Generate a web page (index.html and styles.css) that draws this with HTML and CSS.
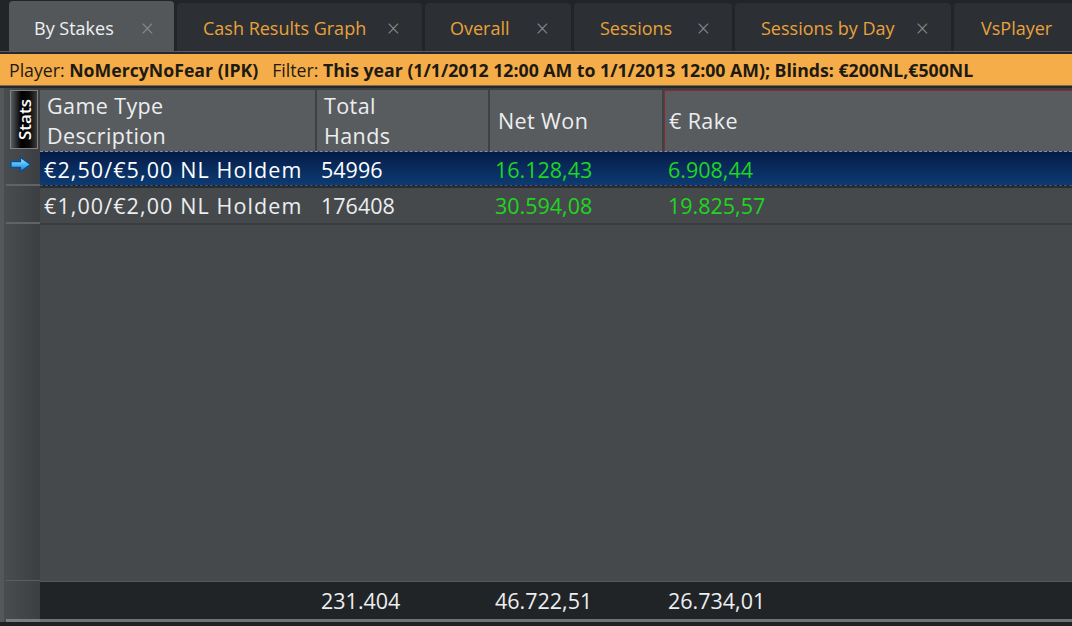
FILE: index.html
```html
<!DOCTYPE html>
<html>
<head>
<meta charset="utf-8">
<link rel="stylesheet" href="styles.css">
</head>
<body>
<div class="app">
  <div class="tabs">
    <div class="tab active"><span class="tl">By Stakes</span><span class="x">×</span></div>
    <div class="tab w1"><span class="tl">Cash Results Graph</span><span class="x">×</span></div>
    <div class="tab w2"><span class="tl">Overall</span><span class="x">×</span></div>
    <div class="tab w3"><span class="tl">Sessions</span><span class="x">×</span></div>
    <div class="tab w4"><span class="tl">Sessions by Day</span><span class="x">×</span></div>
    <div class="tab w5"><span class="tl">VsPlayer</span></div>
  </div>
  <div class="filter">Player: <b>NoMercyNoFear (IPK)</b>&nbsp;&nbsp; Filter: <b>This year (1/1/2012 12:00 AM to 1/1/2013 12:00 AM); Blinds: €200NL,€500NL</b></div>
  <div class="grid">
    <div class="side">
      <div class="side-head"><span class="stats">Stats</span></div>
      <div class="side-row sel">
        <svg width="22" height="17" viewBox="0 0 22 17"><defs><linearGradient id="ag" x1="0" y1="0" x2="0" y2="1"><stop offset="0" stop-color="#b5ecff"/><stop offset="0.5" stop-color="#4cb8f2"/><stop offset="1" stop-color="#1a7fd6"/></linearGradient></defs><path d="M1 5.5 H10.5 V1.5 L20.5 8.5 L10.5 15.5 V11.5 H1 Z" fill="url(#ag)" stroke="#0b4d96" stroke-width="1.3" stroke-linejoin="round"/></svg>
      </div>
      <div class="side-row"></div>
      <div class="side-fill"></div>
      <div class="side-foot"></div>
    </div>
    <div class="table">
      <div class="row head">
        <div class="c c1">Game Type<br>Description</div>
        <div class="c c2">Total<br>Hands</div>
        <div class="c c3">Net Won</div>
        <div class="c c4 sort">€ Rake</div>
      </div>
      <div class="row data sel">
        <div class="c c1">€2,50/€5,00 NL Holdem</div>
        <div class="c c2">54996</div>
        <div class="c c3 g">16.128,43</div>
        <div class="c c4 g">6.908,44</div>
      </div>
      <div class="row data">
        <div class="c c1">€1,00/€2,00 NL Holdem</div>
        <div class="c c2">176408</div>
        <div class="c c3 g">30.594,08</div>
        <div class="c c4 g">19.825,57</div>
      </div>
      <div class="fill"></div>
      <div class="row foot">
        <div class="c c1"></div>
        <div class="c c2">231.404</div>
        <div class="c c3">46.722,51</div>
        <div class="c c4">26.734,01</div>
      </div>
    </div>
  </div>
  <div class="bottom"></div>
</div>
</body>
</html>
```
FILE: styles.css
```css
html, body {
  margin: 0;
  padding: 0;
  background: #26282b;
}
.app {
  width: 1072px;
  height: 626px;
  overflow: hidden;
  display: flex;
  flex-direction: column;
  font-family: "Open Sans", "Noto Sans", sans-serif;
}
.tabs {
  height: 52px;
  display: flex;
  align-items: flex-end;
  padding-left: 9px;
  gap: 3px;
  background: #222427;
  border-bottom: 1px solid #5a5d60;
  box-sizing: border-box;
  flex: none;
}
.tab {
  height: 48px;
  box-sizing: border-box;
  border-radius: 4px 4px 0 0;
  background: #2c2f33;
  display: flex;
  align-items: center;
  padding-top: 2px;
  color: #e9a23b;
  font-size: 18px;
  flex: none;
}
.tab .tl { margin-left: 26px; }
.tab .x {
  color: #8a8c8e;
  font-size: 23px;
  margin-left: auto;
  margin-right: 22px;
  font-weight: 300;
}
.tab.active {
  width: 165px;
  background: #54575a;
  color: #eef0f2;
  height: 50px;
  padding-top: 4px;
}
.tab.active .tl { margin-left: 25px; }
.tab.active .x { margin-right: 20px; }
.tab.w1 { width: 245px; }
.tab.w2 { width: 146px; }
.tab.w2 .tl { margin-left: 25px; }
.tab.w3 { width: 158px; }
.tab.w4 { width: 216px; }
.tab.w5 { width: 130px; }
.tab.w5 .tl { margin-left: 27px; }

.filter {
  flex: none;
  height: 32px;
  margin-top: 2px;
  background: #f4ad48;
  color: #1d1a14;
  font-size: 17.7px;
  line-height: 33px;
  padding-left: 9px;
  white-space: nowrap;
  border-bottom: 1px solid #7c6a4c;
  box-sizing: border-box;
}
.filter b { font-weight: 700; }

.grid {
  flex: none;
  height: 534px;
  display: flex;
  margin-top: 2px;
  border-left: 4px solid #55585b;
  background: #3d4043;
}
.side {
  width: 36px;
  flex: none;
  display: flex;
  flex-direction: column;
  background: linear-gradient(to right, #4a4d50, #3c3f42);
  padding-left: 2px;
  box-sizing: border-box;
}
.side-head {
  height: 62px;
  flex: none;
  padding: 2px 0 0 4px;
  box-sizing: border-box;
}
.stats {
  display: flex;
  align-items: center;
  justify-content: center;
  width: 28px;
  height: 59px;
  background: linear-gradient(to left, #5a5c5e, #000 40%, #0a0a0a 70%, #3a3a3a);
  border: 1px solid #808284;
  box-sizing: border-box;
  color: #fff;
  font-size: 17px;
  font-weight: 600;
  writing-mode: vertical-rl;
  transform: rotate(180deg);
}
.side-row {
  height: 36px;
  flex: none;
  border-bottom: 2px solid #606366;
  display: flex;
  align-items: center;
  padding-left: 4px;
}
.side-row.sel { height: 36px; padding-bottom: 6px; box-sizing: border-box; }
.side-fill { flex: 1; }
.side-foot {
  height: 38px;
  flex: none;
  border-top: 1px solid #5b5e61;
  border-bottom: 3px solid #7b7e80;
}

.table {
  flex: 1;
  display: flex;
  flex-direction: column;
  background: #46494c;
}
.row {
  display: grid;
  grid-template-columns: 277px 173px 174px 1fr;
  flex: none;
}
.c {
  padding-left: 4px;
  box-sizing: border-box;
  font-size: 21.5px;
  white-space: nowrap;
  color: #eceef0;
}
.c3 { padding-left: 5px; }
.head {
  height: 63px;
  background: #595c5f;
  border-top: 2px solid #3d4043;
  box-sizing: border-box;
}
.head .c {
  display: flex;
  align-items: center;
  line-height: 30px;
  border-right: 2px solid #3f4245;
  padding-left: 7px;
  letter-spacing: 0.4px;
}
.head .c3 { padding-left: 8px; }
.head .c.sort {
  border: 1px solid #8a2a30;
  border-right: none;
  border-bottom: none;
  padding-left: 4px;
}
.data {
  height: 37px;
  align-items: center;
  border-bottom: 2px solid #3a3d40;
  box-sizing: border-box;
}
.data .c { line-height: 34px; }
.data .c1 { letter-spacing: 1.1px; padding-left: 4px; }
.data.sel {
  background: linear-gradient(to bottom, #041b48, #0a2f62 60%, #0d3b72);
  border-top: 1px dashed #8a8e94;
  border-bottom: 1px dashed #4c5258;
  box-shadow: 0 2px 0 #2a2d30;
  height: 35px;
  margin-bottom: 2px;
}
.data.sel .c { color: #ffffff; line-height: 35px; }
.c.g, .data.sel .c.g { color: #1fd61f; }
.fill { flex: 1; background: #46494c; }
.foot {
  height: 41px;
  background: #212427;
  border-top: 1px solid #55585b;
  border-bottom: 3px solid #6f7275;
  align-items: center;
  box-sizing: border-box;
}
.foot .c { line-height: 36px; }
.bottom {
  flex: 1;
  background: #1e2023;
}
```
